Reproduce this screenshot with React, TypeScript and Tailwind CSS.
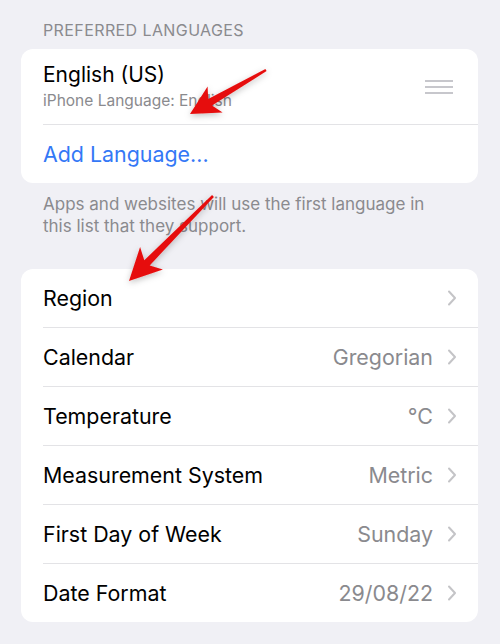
import React from 'react';

type Pt = [number, number];

// builds a tapered arrow polygon from tail to tip
const arrowPoints = (tail: Pt, tip: Pt, headLen: number, headHalf: number, tailW: number, neckW: number) => {
  const dx = tip[0] - tail[0];
  const dy = tip[1] - tail[1];
  const len = Math.hypot(dx, dy);
  const ux = dx / len;
  const uy = dy / len;
  const nx = -uy;
  const ny = ux;
  const base: Pt = [tip[0] - ux * headLen, tip[1] - uy * headLen];
  const notch: Pt = [tip[0] - ux * headLen * 0.8, tip[1] - uy * headLen * 0.8];
  const pts: Pt[] = [
    [tail[0] + nx * tailW / 2, tail[1] + ny * tailW / 2],
    [notch[0] + nx * neckW / 2, notch[1] + ny * neckW / 2],
    [base[0] + nx * headHalf, base[1] + ny * headHalf],
    tip,
    [base[0] - nx * headHalf, base[1] - ny * headHalf],
    [notch[0] - nx * neckW / 2, notch[1] - ny * neckW / 2],
    [tail[0] - nx * tailW / 2, tail[1] - ny * tailW / 2],
  ];
  return pts.map(p => `${p[0].toFixed(1)},${p[1].toFixed(1)}`).join(' ');
};

const Chevron = () => (
  <svg width="10" height="16" viewBox="0 0 10 16" className="shrink-0">
    <path d="M2 1.5 L8 8 L2 14.5" fill="none" stroke="#c4c4c7" strokeWidth="2" strokeLinecap="round" strokeLinejoin="round" />
  </svg>
);

const ROWS = [
  { label: 'Region', value: '' },
  { label: 'Calendar', value: 'Gregorian' },
  { label: 'Temperature', value: '°C' },
  { label: 'Measurement System', value: 'Metric' },
  { label: 'First Day of Week', value: 'Sunday' },
  { label: 'Date Format', value: '29/08/22' },
];

export default function App() {
  return (
    <div className="relative w-[500px] h-[644px] overflow-hidden bg-[#f0f0f5] font-['Inter',sans-serif] antialiased">
      <div className="pt-[20px] px-[21px] pr-[22px]">
        <div className="pl-[22px] text-[16px] leading-[20px] text-[#8a8a8e] tracking-[0.4px]">PREFERRED LANGUAGES</div>

        <div className="mt-[9px] bg-white rounded-[12px]">
          <div className="flex items-center pl-[22px] pr-[25px] pt-[14px] pb-[13px] h-[75px]">
            <div className="flex-1">
              <div className="text-[21px] leading-[24px] text-black">English (US)</div>
              <div className="mt-[4px] text-[15.5px] leading-[20px] text-[#8a8a8e]">iPhone Language: English</div>
            </div>
            <div className="flex flex-col gap-[4.5px] w-[28px]">
              <div className="h-[1.5px] bg-[#c7c7cc]" />
              <div className="h-[1.5px] bg-[#c7c7cc]" />
              <div className="h-[1.5px] bg-[#c7c7cc]" />
            </div>
          </div>
          <div className="ml-[22px] h-px bg-[#e3e3e6]" />
          <div className="h-[58px] flex items-center pl-[22px] text-[21.4px] text-[#3478f6]">Add Language...</div>
        </div>

        <div className="mt-[10px] pl-[22px] pr-[40px] text-[17px] leading-[22px] text-[#8a8a8e]">
          Apps and websites will use the first language in this list that they support.
        </div>

        <div className="mt-[32px] bg-white rounded-[12px]">
          {ROWS.map((r, i) => (
            <div key={r.label}>
              {i > 0 && <div className="ml-[22px] h-px bg-[#e3e3e6]" />}
              <div className="h-[58px] flex items-center pl-[22px] pr-[21px]">
                <span className="flex-1 text-[21.4px] text-black">{r.label}</span>
                {r.value && <span className="text-[21.4px] text-[#8a8a8e] mr-[14px]">{r.value}</span>}
                <Chevron />
              </div>
            </div>
          ))}
        </div>
      </div>

      <svg className="absolute inset-0 pointer-events-none" width="500" height="644">
        <defs>
          <filter id="sh" x="-20%" y="-20%" width="140%" height="140%">
            <feDropShadow dx="0" dy="2" stdDeviation="3" floodColor="#000" floodOpacity="0.25" />
          </filter>
        </defs>
        <polygon points={arrowPoints([266, 70], [190, 114], 29, 15, 2.5, 7.5)} fill="#e60f0f" filter="url(#sh)" />
        <polygon points={arrowPoints([213, 196], [129, 281], 32, 16, 2.5, 7.5)} fill="#e60f0f" filter="url(#sh)" />
      </svg>
    </div>
  );
}
